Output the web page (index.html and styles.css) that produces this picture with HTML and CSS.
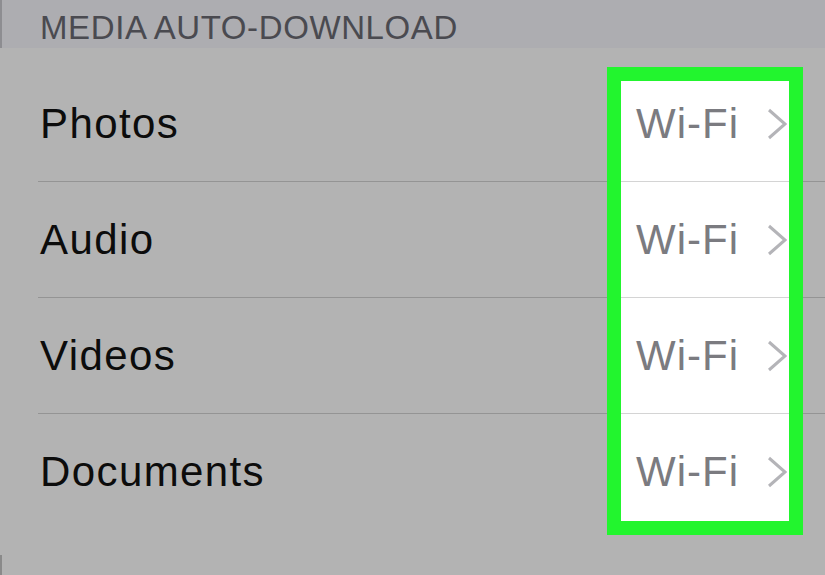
FILE: index.html
```html
<!DOCTYPE html>
<html lang="en">
<head>
    <meta charset="UTF-8">
    <meta name="viewport" content="width=device-width, initial-scale=1.0">
    <title>Media Auto-Download</title>
    <link rel="stylesheet" href="styles.css">
</head>
<body>
    <div class="screen">
        <div class="section-header">MEDIA AUTO-DOWNLOAD</div>

        <div class="list">
            <!-- white fill under the values, green frame above everything -->
            <div class="highlight-fill"></div>
            <div class="highlight-frame"></div>

            <div class="row">
                <span class="label">Photos</span>
                <span class="value">Wi-Fi <svg class="chevron" viewBox="0 0 20 32"><path d="M2 2 L18 16 L2 30" /></svg></span>
            </div>
            <div class="row">
                <span class="label">Audio</span>
                <span class="value">Wi-Fi <svg class="chevron" viewBox="0 0 20 32"><path d="M2 2 L18 16 L2 30" /></svg></span>
            </div>
            <div class="row">
                <span class="label">Videos</span>
                <span class="value">Wi-Fi <svg class="chevron" viewBox="0 0 20 32"><path d="M2 2 L18 16 L2 30" /></svg></span>
            </div>
            <div class="row">
                <span class="label">Documents</span>
                <span class="value">Wi-Fi <svg class="chevron" viewBox="0 0 20 32"><path d="M2 2 L18 16 L2 30" /></svg></span>
            </div>
        </div>

        <div class="next-section">
            <span class="reset">Reset Auto-Download Settings</span>
        </div>
    </div>
</body>
</html>
```

FILE: styles.css
```css
* {
    box-sizing: border-box;
    margin: 0;
    padding: 0;
}

body {
    background-color: #b3b3b3;
    font-family: "Liberation Sans", Arial, sans-serif;
    overflow: hidden;
}

.screen {
    width: 825px;
    height: 575px;
    overflow: hidden;
}

.section-header {
    height: 48px;
    padding: 7px 0 0 38px;
    line-height: 41px;
    font-size: 33px;
    letter-spacing: 0.6px;
    color: #4a4a50;
    background-color: #adadb1;
    border-left: 2px solid #8d8d91;
}

.list {
    position: relative;
    padding-top: 18px;
}

/* Highlight box drawn over the value column */
.highlight-fill {
    position: absolute;
    left: 621px;
    top: 33px;
    width: 168px;
    height: 440px;
    background-color: #fff;
    z-index: 0;
}

.highlight-frame {
    position: absolute;
    left: 607px;
    top: 19px;
    width: 196px;
    height: 468px;
    border: 14px solid #22f52e;
    z-index: 2;
}

.row {
    position: relative;
    z-index: 1;
    display: flex;
    justify-content: space-between;
    align-items: center;
    height: 116px;
    margin-left: 38px;
    padding: 0 38px 0 2px;
    border-bottom: 1px solid rgba(0, 0, 0, 0.17);
    font-size: 42px;
    line-height: 116px;
}

.row:last-child {
    border-bottom: none;
}

.label {
    color: #0c0c0c;
    letter-spacing: 1.4px;
}

.value {
    display: flex;
    align-items: center;
    gap: 28px;
    color: #7b7b80;
    letter-spacing: 1px;
}

.chevron {
    width: 20px;
    height: 32px;
    fill: none;
    stroke: #b4b4b8;
    stroke-width: 3;
}

.next-section {
    margin-top: 25px;
    height: 40px;
    padding-top: 17px;
    border-left: 2px solid #8a8a8a;
    text-align: center;
    font-size: 40px;
    line-height: 40px;
    color: #6a6a6a;
}
```
